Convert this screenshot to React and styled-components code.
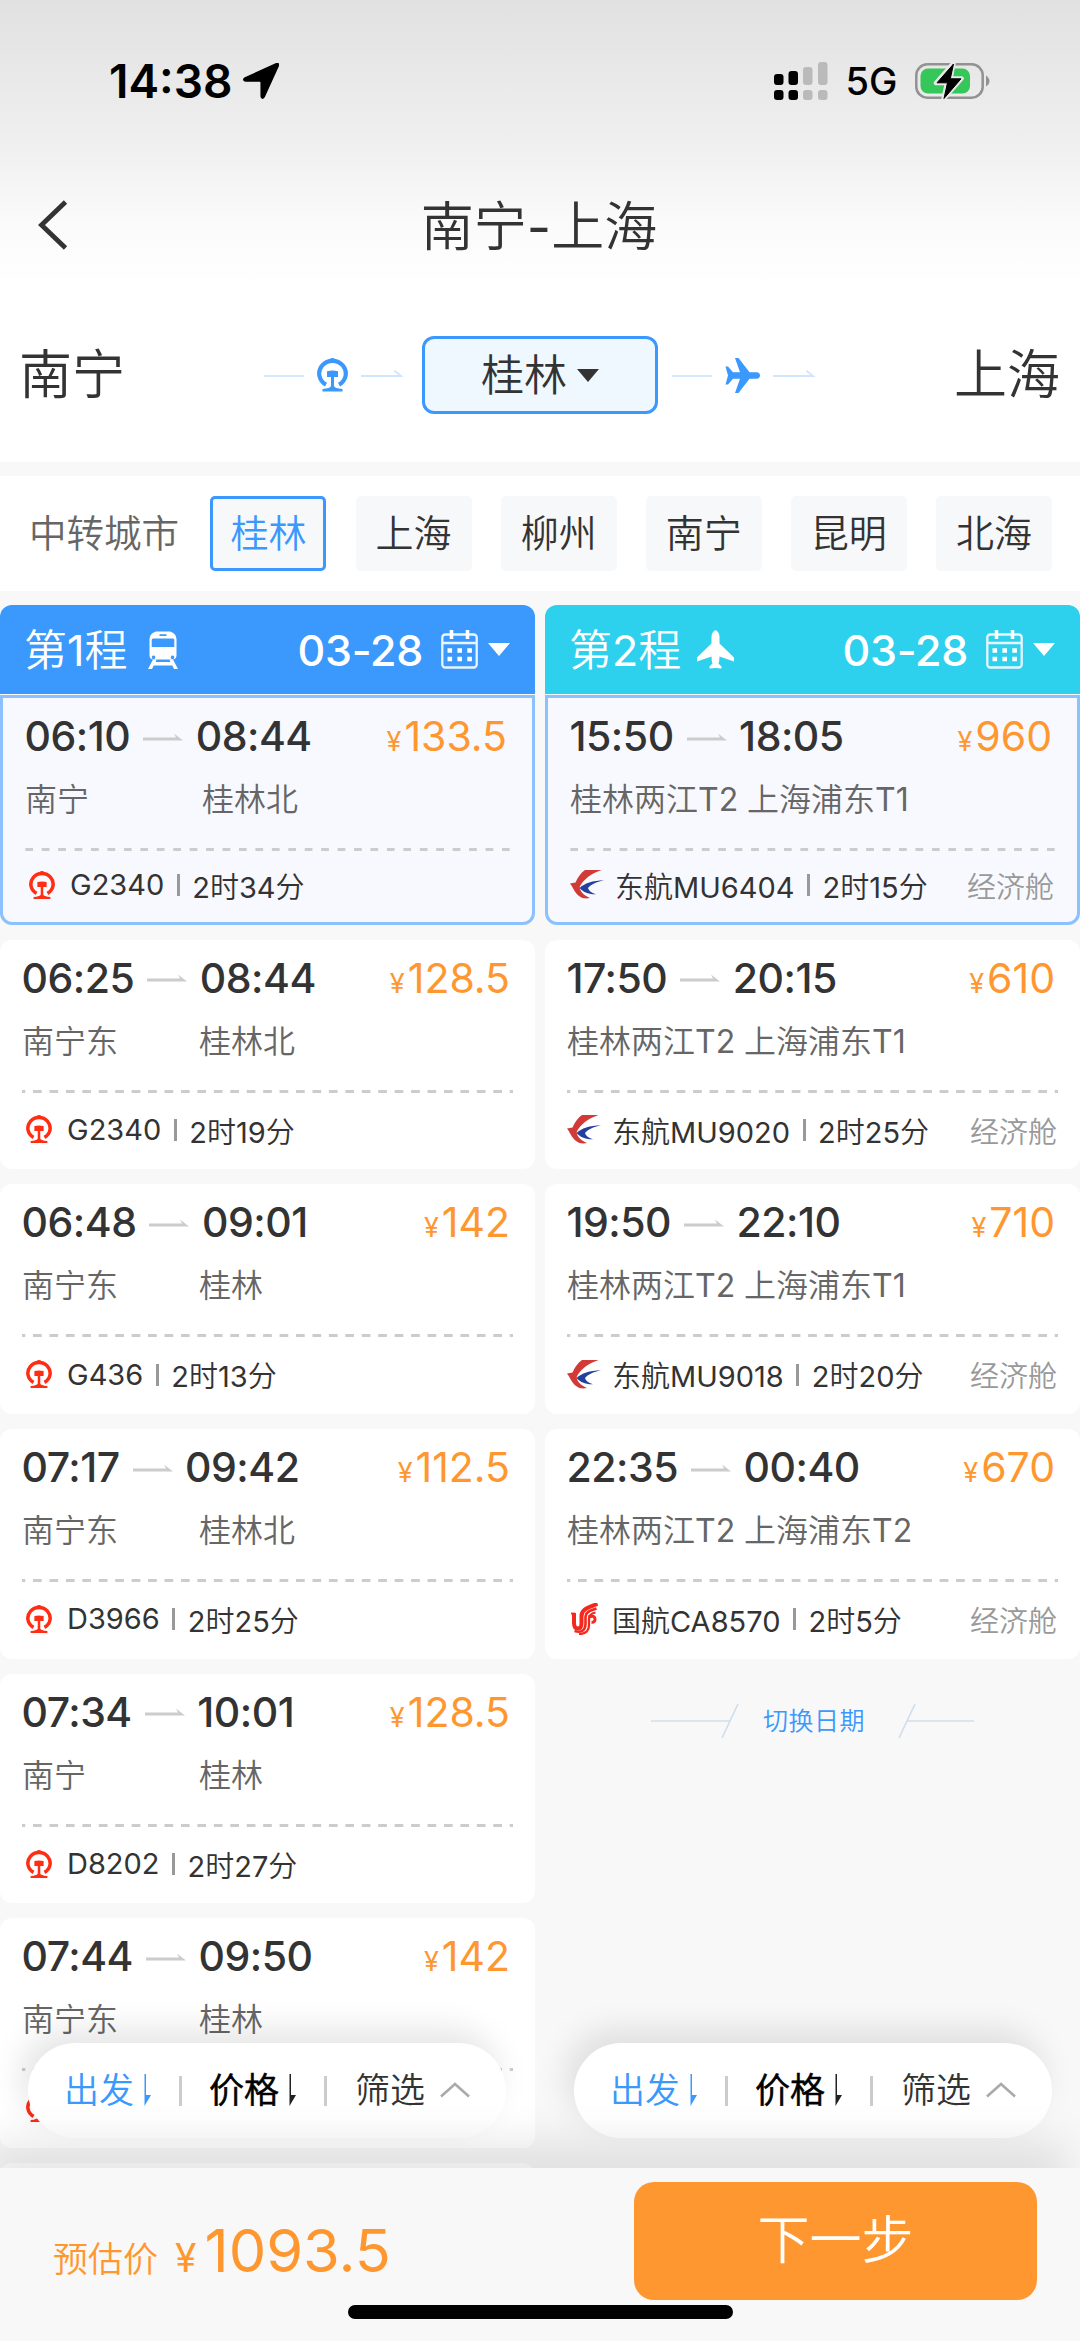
import React from "react";
import styled, { createGlobalStyle } from "styled-components";

const BLUE = "#3b98fc";
const ORANGE = "#ff9730";
const INK = "#333333";

const GlobalStyle = createGlobalStyle`
  * { box-sizing: border-box; }
  body {
    margin: 0;
    background: #f8f8f8;
    color: ${INK};
    font-family: Inter, "Noto Sans CJK SC DemiLight", "Noto Sans CJK SC Light", "Noto Sans CJK SC", sans-serif;
    font-weight: 400;
  }
  svg { display: block; flex: none; }
`;

const Screen = styled.div`
  width: 1080px;
  height: 2341px;
  display: flex;
  flex-direction: column;
  overflow: hidden;
  position: relative;
`;

const Top = styled.header`
  height: 462px;
  flex: none;
  background: linear-gradient(#e1e1e1 0, #e9e9e9 80px, #f0f0f0 150px, #fafafa 220px, #ffffff 285px);
`;

const StatusBar = styled.div`
  height: 160px;
  padding: 2px 90px 0 109px;
  display: flex;
  justify-content: space-between;
  align-items: center;
  color: #000;
`;

const StatusGroup = styled.div`
  display: flex;
  align-items: center;
  gap: ${(p) => p.$gap}px;
`;

const Clock = styled.span`
  font-size: 46px;
  line-height: 60px;
  font-weight: 600;
`;

const Network = styled.span`
  font-size: 38px;
  font-weight: 500;
  line-height: 60px;
`;

const TitleBar = styled.div`
  height: 130px;
  padding: 0 38px;
  display: grid;
  grid-template-columns: 60px 1fr 60px;
  align-items: center;
`;

const Title = styled.h1`
  margin: 4px 2px 0 0;
  font-size: 53px;
  font-weight: 400;
  line-height: 126px;
  text-align: center;
`;

const Route = styled.div`
  height: 170px;
  display: grid;
  grid-template-columns: 264px 158px 236px 158px 1fr;
  align-items: center;
`;

const City = styled.div`
  font-size: 53px;
  line-height: 80px;
  text-align: ${(p) => p.$align};
  padding: 0 20px 0 19px;
`;

const Leg = styled.div`
  display: flex;
  align-items: center;
  gap: 13px;
  padding-left: ${(p) => p.$inset}px;
`;

const LegLine = styled.i`
  width: 40px;
  height: 2px;
  margin-top: 2px;
  background: #d3e8ff;
`;

const TransferBox = styled.button`
  width: 236px;
  height: 78px;
  padding: 0;
  border: 3px solid ${BLUE};
  border-radius: 12px;
  background: #eff7ff;
  color: ${INK};
  font: inherit;
  font-size: 43px;
  line-height: 70px;
  display: flex;
  align-items: center;
  justify-content: center;
  gap: 10px;
`;

const Transfers = styled.section`
  height: 115px;
  flex: none;
  margin-top: 14px;
  padding: 0 0 0 29px;
  background: #fff;
  display: flex;
  align-items: center;
  gap: 29.100px;
`;

const TransfersLabel = styled.span`
  width: 152.400px;
  flex: none;
  font-size: 37.500px;
  line-height: 60px;
  color: #666;
  white-space: nowrap;
`;

const Chip = styled.button`
  width: 116px;
  height: 75px;
  padding: 0 0 2px;
  flex: none;
  font: inherit;
  font-size: 38px;
  line-height: 60px;
  text-align: center;
  border-radius: 5px;
  border: 3px solid ${(p) => (p.$active ? BLUE : "#f7f8fa")};
  background: #f7f8fa;
  color: ${(p) => (p.$active ? BLUE : INK)};
`;

const Columns = styled.main`
  margin-top: 14px;
  height: 1563px;
  flex: none;
  display: grid;
  grid-template-columns: 535px 535px;
  column-gap: 10px;
  overflow: hidden;
`;

const Column = styled.section`
  display: flex;
  flex-direction: column;
  gap: 15px;
`;

const FirstBlock = styled.div`
  display: flex;
  flex-direction: column;
  gap: 1px;
`;

const LegHeader = styled.div`
  height: 89px;
  padding: 0 25px 0 24px;
  border-radius: 12px 12px 0 0;
  background: ${(p) => p.$color};
  color: #fff;
  display: flex;
  align-items: center;
`;

const LegName = styled.span`
  font-size: 43px;
  line-height: 80px;
  margin-right: ${(p) => p.$gap}px;
`;

const LegDate = styled.span`
  margin-left: auto;
  margin-right: 18px;
  font-size: 43px;
  font-weight: 450;
  letter-spacing: -0.300px;
  line-height: 80px;
`;

const Triangle = styled.i`
  width: 0;
  height: 0;
  border: solid transparent;
  border-width: 13px 11px 0;
  border-top-color: ${(p) => p.$color};
  margin-left: ${(p) => p.$gap || 0}px;
`;

const Card = styled.article`
  height: 229.700px;
  flex: none;
  padding: 13px 22px 0;
  display: flex;
  flex-direction: column;
  background: ${(p) => (p.$selected ? "#f8f9ff" : "#fff")};
  border: ${(p) => (p.$selected ? "3px solid #8bc1ff" : "none")};
  border-radius: ${(p) => (p.$selected ? "0 0 12px 12px" : "12px")};
`;

const TimeRow = styled.div`
  height: 51px;
  display: flex;
  align-items: center;
  gap: 13px;
  font-size: 41px;
  line-height: 51px;
`;

const Time = styled.span`
  font-weight: 500;
  letter-spacing: -0.500px;
  margin-left: -0.500px;
`;

const Price = styled.span`
  margin: 0 3px 0 auto;
  color: ${ORANGE};
`;

const Yen = styled.small`
  font-size: ${(p) => p.$size}px;
  margin-right: ${(p) => p.$gap}px;
  line-height: 1;
`;

const StationRow = styled.div`
  height: 76px;
  display: grid;
  grid-template-columns: 177px 1fr;
  font-size: 32px;
  font-weight: 380;
  line-height: 76px;
  color: #666;
  white-space: nowrap;
`;

const Dashes = styled.div`
  height: 3px;
  margin-top: 10px;
  flex: none;
  background-image: ${(p) =>
    p.$gapCentred
      ? "linear-gradient(90deg, #ccc 4px, transparent 4px 12.45px, #ccc 12.45px)"
      : "linear-gradient(90deg, transparent 4.2px, #ccc 4.2px 12.2px, transparent 12.2px)"};
  background-size: 16.450px 3px;
  background-position: center;
`;

const ServiceRow = styled.div`
  flex: 1;
  padding-bottom: 3px;
  display: flex;
  align-items: center;
  font-size: 29px;
  white-space: nowrap;
`;

const LogoSlot = styled.span`
  width: 45px;
  padding-left: ${(p) => p.$inset}px;
  flex: none;
`;

const Divider = styled.i`
  width: 3px;
  height: ${(p) => p.$h}px;
  background: ${(p) => p.$color};
  margin: 1px ${(p) => p.$gap}px 0;
  flex: none;
`;

const Cabin = styled.span`
  margin: 0 1px 0 auto;
  color: #999;
`;

const SwitchDate = styled.div`
  margin-top: 28px;
  padding-left: 106px;
  display: flex;
  align-items: center;
  font-size: 25px;
  line-height: 38px;
  letter-spacing: 0.500px;
  color: ${BLUE};
`;

const SwitchText = styled.span`
  margin: 0 33px 0 24px;
`;

const FilterPill = styled.div`
  position: absolute;
  top: 2043px;
  left: ${(p) => p.$left}px;
  width: 478px;
  height: 95px;
  padding: 0 30px 0 36px;
  border-radius: 48px;
  background: #fff;
  box-shadow: -8px -14px 32px rgba(0, 0, 0, 0.1);
  display: flex;
  align-items: center;
  font-size: 35px;
`;

const FilterItem = styled.span`
  display: flex;
  align-items: center;
  gap: ${(p) => p.$gap}px;
  color: ${(p) => p.$color};
  line-height: 60px;
  margin-top: -2px;
  white-space: nowrap;
`;

const FilterName = styled.span`
  -webkit-text-stroke: ${(p) => (p.$strong ? "0.6px #000" : "0")};
`;

const Footer = styled.footer`
  position: relative;
  flex: 1;
  padding: 14px 43px 0 53px;
  background: #f8f8f8;
  box-shadow: -12px -28px 38px rgba(0, 0, 0, 0.09);
  display: grid;
  grid-template-columns: 1fr 403px;
  grid-template-rows: 118px 1fr;
`;

const Estimate = styled.div`
  color: ${ORANGE};
  font-size: 59.500px;
  line-height: 136px;
  white-space: nowrap;
`;

const EstimateLabel = styled.span`
  font-size: 35px;
  margin-right: 17px;
`;

const NextButton = styled.button`
  border: 0;
  border-radius: 20px;
  background: ${ORANGE};
  color: #fff;
  font: inherit;
  font-size: 52px;
  line-height: 116px;
  padding: 0;
`;

const HomeIndicator = styled.i`
  grid-column: 1 / -1;
  width: 385px;
  height: 14px;
  margin: 5px 0 0 295px;
  border-radius: 7px;
  background: #000;
`;

const LocationArrow = () => (
  <svg width="36" height="36" viewBox="0 0 36 36">
    <path d="M33.4 .8C35 .1 36 1 35.3 2.700L21.200 33.800C20.300 35.800 18.200 35.500 18.200 33.300V19.600Q18.200 18 16.600 18H2.700C.5 18 .1 15.800 2.100 14.900Z" fill="#000" stroke="#000" strokeWidth="1.500" />
  </svg>
);

const Signal = () => (
  <svg width="54" height="38" viewBox="0 0 54 38">
    <g fill="#000">
      <rect x="0" y="12" width="9.500" height="11" rx="3" />
      <rect x="14.500" y="9" width="9.500" height="14" rx="3" />
      <rect x="0" y="28" width="9.500" height="10" rx="3" />
      <rect x="14.500" y="28" width="9.500" height="10" rx="3" />
    </g>
    <g fill="#b9bab9">
      <rect x="29" y="5" width="9.500" height="18" rx="3" />
      <rect x="44" y="0" width="9.500" height="23" rx="3" />
      <rect x="29" y="28" width="9.500" height="10" rx="3" />
      <rect x="44" y="28" width="9.500" height="10" rx="3" />
    </g>
  </svg>
);

const Battery = () => (
  <svg width="75" height="38" viewBox="0 0 75 38">
    <rect x="1.300" y="2.300" width="66.400" height="33.400" rx="11" fill="none" stroke="#929292" strokeWidth="2.500" />
    <rect x="5.500" y="6.500" width="49.500" height="25" rx="7.500" fill="#35c759" />
    <path d="M71 13.500Q74.500 16 74.500 19T71 24.500Z" fill="#929292" />
    <path d="M38.500 1L21 21H32L28.500 37L46.500 16.500H35.500Z" fill="#000" stroke="#e9e9e9" strokeWidth="4.500" strokeLinejoin="round" />
    <path d="M38.500 2L22 20.800H32.500L29 36.500L46 16.800H35.300Z" fill="#000" stroke="#000" strokeWidth="1" strokeLinejoin="round" />
  </svg>
);

const BackIcon = () => (
  <svg width="30" height="50" viewBox="0 0 30 50">
    <path d="M27.500 2L3.500 25L27.500 48" fill="none" stroke={INK} strokeWidth="4.800" />
  </svg>
);

const RailLogo = ({ width, color }) => (
  <svg width={width} height={width * 1.08} viewBox="0 0 31 33.500" fill={color}>
    <path d="M9 26.700A13.300 12.700 0 1 1 22 26.700" fill="none" stroke={color} strokeWidth="4.200" />
    <path d="M10 4.500Q12.500 0 15.500 0T21 4.500Z" />
    <path d="M10 13.200Q15.500 12 21 13.200V19H17V28Q17.500 30.300 25.500 31V33.500H5.500V31Q13.500 30.300 14 28V19H10Z" />
  </svg>
);

const BluePlane = () => (
  <svg width="35" height="35" viewBox="0 0 35 35">
    <path d="M10 0H13.500L24.500 14.200H31.500Q35 14.500 35 17.500T31.500 20.800H24.500L13.500 35H10L15 20.800H8L3 26.500H.5L3 17.500L.5 8.500H3L8 14.200H15Z" fill={BLUE} />
  </svg>
);

const WhitePlane = () => (
  <svg width="37" height="39" viewBox="0 0 37 39">
    <path d="M18.500 0Q22.500 2 22.500 7V13.500L37 27.500V31.500L22.500 26.500Q22.500 31 21.500 33.500L24.500 36.500V38.500L18.500 38L12.500 38.500V36.500L15.500 33.500Q14.500 31 14.500 26.500L0 31.500V27.500L14.500 13.500V7Q14.500 2 18.500 0Z" fill="#fff" />
  </svg>
);

const TrainIcon = () => (
  <svg width="30" height="38" viewBox="0 0 30 38" fill="#fff">
    <path
      fillRule="evenodd"
      d="M8 .5H22Q28.500 2.500 28.500 8V24Q28.500 28 25 28.500H5Q1.500 28 1.500 24V8Q1.500 2.500 8 .5ZM11.500 3.200V5H18.500V3.200ZM5 7.500Q3.700 7.500 3.700 9V16H26.300V9Q26.300 7.500 25 7.500ZM5.500 24.500a1.800 1.800 0 1 0 .1 0ZM24.500 24.500a1.800 1.800 0 1 0 .1 0Z"
    />
    <path d="M5 28.500H8.500L7.700 31H22.300L21.500 28.500H25L30 38H26L24.300 34.500H5.700L4 38H0Z" />
  </svg>
);

const CalendarIcon = () => (
  <svg width="37" height="39" viewBox="0 0 37 39">
    <rect x="1.300" y="4.500" width="34.400" height="33" rx="3" fill="none" stroke="#e8f5ff" strokeWidth="2.300" />
    <path d="M1 13H36" stroke="#e8f5ff" strokeWidth="2.300" />
    <path d="M10.500 0V9M26.500 0V9" stroke="#fff" strokeWidth="3.600" />
    <path d="M6.500 20.500H31M6.500 29H31" stroke="#fff" strokeWidth="4.600" strokeDasharray="4.600 5.300" />
  </svg>
);

const LegArrow = () => (
  <svg width="42" height="10" viewBox="0 0 42 10">
    <path d="M0 6H40L33.500 .8" fill="none" stroke="#cfe6ff" strokeWidth="1.900" />
  </svg>
);

const TimeArrow = () => (
  <svg width="40" height="8" viewBox="0 0 40 8">
    <path d="M0 4.500H33L31 .5L40 7.500H0Z" fill="#ccc" />
  </svg>
);

const EasternLogo = () => (
  <svg width="34" height="29" viewBox="0 0 34 29">
    <path d="M31.600 0H15C11 2.500 8 7 5.500 12.500L0 13.500C3 17 4 22 9 26C12 28.500 16 29 20 28C13 25 9.500 21 9.800 16.500C14 9 21 3.500 31.600 0Z" fill="#d23a38" />
    <path d="M34 10.300C23 10.500 14 13.500 9.700 18C13 22 18 24.500 26 24.300C21 22.500 18.500 20.500 18 18C21 14.500 26 12 34 10.300Z" fill="#23409b" />
  </svg>
);

const AirChinaLogo = () => (
  <svg width="27" height="32" viewBox="0 0 27 32" fill="none" stroke="#f5281e">
    <path d="M3 10V20Q3 25.500 7 25.500Q10.500 25.500 10.500 20V13C10.500 6 17 4.500 26.500 .8" strokeWidth="4" />
    <path d="M0 10.500H4" strokeWidth="1.800" />
    <path d="M3.500 28Q14 31 14.500 21V13.500C15 8.500 19 8 25.500 5.500" strokeWidth="2.600" />
    <path d="M8 31Q18.500 31 18 21V15.500Q18 11 24.500 9.500" strokeWidth="2.300" />
    <path d="M17.500 14Q24 11.500 24 16.500Q24 19.500 20.500 19.200" strokeWidth="3" />
  </svg>
);

const SortArrow = ({ color }) => (
  <svg width="7" height="32" viewBox="0 0 7 32">
    <path d="M.5 0H2V21H7L.5 32Z" fill={color} />
  </svg>
);

const ChevronUp = () => (
  <svg width="30" height="16" viewBox="0 0 30 16">
    <path d="M1 14.500L15 2L29 14.500" fill="none" stroke="#aaa" strokeWidth="2.600" />
  </svg>
);

const SwitchLineLeft = () => (
  <svg width="88" height="34" viewBox="0 0 88 34">
    <path d="M0 17H79M71 34L87 0" stroke="#d0deec" strokeWidth="1.600" />
  </svg>
);

const SwitchLineRight = () => (
  <svg width="76" height="34" viewBox="0 0 76 34">
    <path d="M9 17H76M1 34L17 0" stroke="#d0deec" strokeWidth="1.600" />
  </svg>
);

const cities = ["桂林", "上海", "柳州", "南宁", "昆明", "北海"];

const trains = [
  { from: "06:10", to: "08:44", price: "133.5", a: "南宁", b: "桂林北", no: "G2340", dur: "2时34分" },
  { from: "06:25", to: "08:44", price: "128.5", a: "南宁东", b: "桂林北", no: "G2340", dur: "2时19分" },
  { from: "06:48", to: "09:01", price: "142", a: "南宁东", b: "桂林", no: "G436", dur: "2时13分" },
  { from: "07:17", to: "09:42", price: "112.5", a: "南宁东", b: "桂林北", no: "D3966", dur: "2时25分" },
  { from: "07:34", to: "10:01", price: "128.5", a: "南宁", b: "桂林", no: "D8202", dur: "2时27分" },
  { from: "07:44", to: "09:50", price: "142", a: "南宁东", b: "桂林" },
];

const flights = [
  { from: "15:50", to: "18:05", price: "960", a: "桂林两江T2", b: "上海浦东T1", no: "东航MU6404", dur: "2时15分", air: "mu" },
  { from: "17:50", to: "20:15", price: "610", a: "桂林两江T2", b: "上海浦东T1", no: "东航MU9020", dur: "2时25分", air: "mu" },
  { from: "19:50", to: "22:10", price: "710", a: "桂林两江T2", b: "上海浦东T1", no: "东航MU9018", dur: "2时20分", air: "mu" },
  { from: "22:35", to: "00:40", price: "670", a: "桂林两江T2", b: "上海浦东T2", no: "国航CA8570", dur: "2时5分", air: "ca" },
];

const logos = {
  rail: { inset: 4, node: <RailLogo width={26} color="#ff2d12" /> },
  mu: { inset: 0, node: <EasternLogo /> },
  ca: { inset: 4, node: <AirChinaLogo /> },
};

function Trip({ trip, selected }) {
  const logo = logos[trip.air || "rail"];
  return (
    <Card $selected={selected}>
      <TimeRow>
        <Time>{trip.from}</Time>
        <TimeArrow />
        <Time>{trip.to}</Time>
        <Price>
          <Yen $size={27} $gap={3}>¥</Yen>
          {trip.price}
        </Price>
      </TimeRow>
      <StationRow>
        <span>{trip.a}</span>
        <span>{trip.b}</span>
      </StationRow>
      <Dashes $gapCentred={selected} />
      <ServiceRow>
        <LogoSlot $inset={logo.inset}>{logo.node}</LogoSlot>
        {trip.no && (
          <>
            <span>{trip.no}</span>
            <Divider $h={22} $gap={12.5} $color="#999" />
            <span>{trip.dur}</span>
          </>
        )}
        {trip.air && <Cabin>经济舱</Cabin>}
      </ServiceRow>
    </Card>
  );
}

function TripColumn({ name, icon, iconGap, color, trips, children }) {
  const [first, ...rest] = trips;
  return (
    <Column>
      <FirstBlock>
        <LegHeader $color={color}>
          <LegName $gap={iconGap}>{name}</LegName>
          {icon}
          <LegDate>03-28</LegDate>
          <CalendarIcon />
          <Triangle $color="#fff" $gap={10} />
        </LegHeader>
        <Trip trip={first} selected />
      </FirstBlock>
      {rest.map((t) => (
        <Trip key={t.from} trip={t} />
      ))}
      {children}
    </Column>
  );
}

function Filters({ left }) {
  return (
    <FilterPill $left={left}>
      <FilterItem $color={BLUE} $gap={10}>
        <FilterName>出发</FilterName>
        <SortArrow color={BLUE} />
      </FilterItem>
      <Divider $h={30} $gap={27.5} $color="#ccc" />
      <FilterItem $color="#000" $gap={10}>
        <FilterName $strong>价格</FilterName>
        <SortArrow color="#222" />
      </FilterItem>
      <Divider $h={30} $gap={28} $color="#ccc" />
      <FilterItem $color={INK} $gap={15}>
        <FilterName>筛选</FilterName>
        <ChevronUp />
      </FilterItem>
    </FilterPill>
  );
}

export default function App() {
  return (
    <>
      <GlobalStyle />
      <Screen>
        <Top>
          <StatusBar>
            <StatusGroup $gap={11}>
              <Clock>14:38</Clock>
              <LocationArrow />
            </StatusGroup>
            <StatusGroup $gap={17.5}>
              <Signal />
              <Network>5G</Network>
              <Battery />
            </StatusGroup>
          </StatusBar>
          <TitleBar>
            <BackIcon />
            <Title>南宁-上海</Title>
          </TitleBar>
          <Route>
            <City $align="left">南宁</City>
            <Leg $inset={0}>
              <LegLine />
              <RailLogo width={31} color={BLUE} />
              <LegArrow />
            </Leg>
            <TransferBox>
              桂林
              <Triangle $color={INK} />
            </TransferBox>
            <Leg $inset={14}>
              <LegLine />
              <BluePlane />
              <LegArrow />
            </Leg>
            <City $align="right">上海</City>
          </Route>
        </Top>
        <Transfers>
          <TransfersLabel>中转城市</TransfersLabel>
          {cities.map((c, i) => (
            <Chip key={c} $active={i === 0}>{c}</Chip>
          ))}
        </Transfers>
        <Columns>
          <TripColumn name="第1程" icon={<TrainIcon />} iconGap={20} color={BLUE} trips={trains}>
            <Card />
          </TripColumn>
          <TripColumn name="第2程" icon={<WhitePlane />} iconGap={16} color="#2dd0ed" trips={flights}>
            <SwitchDate>
              <SwitchLineLeft />
              <SwitchText>切换日期</SwitchText>
              <SwitchLineRight />
            </SwitchDate>
          </TripColumn>
        </Columns>
        <Filters left={28} />
        <Filters left={574} />
        <Footer>
          <Estimate>
            <EstimateLabel>预估价</EstimateLabel>
            <Yen $size={39} $gap={8}>¥</Yen>
            1093.5
          </Estimate>
          <NextButton>下一步</NextButton>
          <HomeIndicator />
        </Footer>
      </Screen>
    </>
  );
}
